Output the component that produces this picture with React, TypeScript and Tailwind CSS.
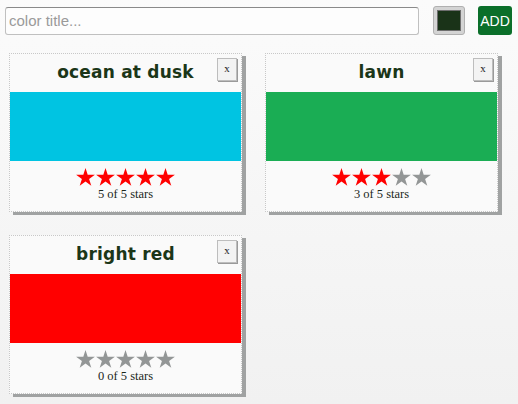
import * as React from 'react'

interface ColorItem {
    title: string
    color: string
    rating: number
}

const colors: ColorItem[] = [
    { title: 'ocean at dusk', color: '#00c4e2', rating: 5 },
    { title: 'lawn', color: '#1aad54', rating: 3 },
    { title: 'bright red', color: '#ff0000', rating: 0 }
]

function Star({ selected }: { selected: boolean }) {
    return (
        <svg width="19" height="18" viewBox="0 0 24 23" className="block">
            <polygon
                points="12,0 14.8,8.6 24,8.6 16.6,14 19.4,22.8 12,17.4 4.6,22.8 7.4,14 0,8.6 9.2,8.6"
                fill={selected ? '#ff0000' : '#939696'}
            />
        </svg>
    )
}

function ColorCard({ title, color, rating }: ColorItem) {
    return (
        <div className="relative w-[233px] h-[159px] flex flex-col bg-[#fafafa] border border-dotted border-[#c8c8c8] shadow-[4px_3px_0_#a0a2a2]">
            <div className="h-[38px] flex items-center justify-center">
                <h1 className="text-[17px] font-bold text-[#1b3618] font-['DejaVu_Sans',sans-serif] tracking-[0.2px]">
                    {title}
                </h1>
            </div>
            <button className="absolute top-[4px] right-[4px] w-[20px] h-[23px] bg-[#f3f3f3] border border-[#bdbdbd] shadow-[1px_1px_0_#9a9a9a] text-[11px] leading-none text-[#222] font-['Liberation_Serif',serif] flex items-center justify-center pb-[3px]">
                x
            </button>
            <div className="h-[69px] w-full" style={{ backgroundColor: color }} />
            <div className="flex-1 flex flex-col items-center pt-[7px]">
                <div className="flex gap-[1px]">
                    {[0, 1, 2, 3, 4].map(i => (
                        <Star key={i} selected={i < rating} />
                    ))}
                </div>
                <p className="text-[12.5px] leading-[14px] mt-[1px] text-[#1a261a] font-['Liberation_Serif',serif]">
                    {rating} of 5 stars
                </p>
            </div>
        </div>
    )
}

export default function App() {
    return (
        <div className="w-[518px] h-[404px] overflow-hidden bg-gradient-to-b from-[#fbfbfb] to-[#f1f1f1] font-['Liberation_Sans',sans-serif]">
            <form className="flex items-center pt-[6px] pl-[5px]" onSubmit={e => e.preventDefault()}>
                <input
                    type="text"
                    placeholder="color title..."
                    className="w-[414px] h-[28px] px-[3px] border border-[#c0c0c0] border-t-[#8a8a8a] rounded-[3px] bg-[#fdfdfd] text-[15px] placeholder:text-[#9a9a9a] outline-none"
                />
                <div className="ml-[14px] w-[32px] h-[29px] rounded-[3px] border border-[#b0b0b0] bg-[#d4d4d4] p-[3px]">
                    <div className="w-full h-full bg-[#1a3318] border border-[#6e6e6e]" />
                </div>
                <button className="ml-[13px] w-[34px] h-[29px] rounded-[3px] bg-[#0b6f2a] bg-[radial-gradient(#1cb048_35%,transparent_40%)] bg-[length:2px_2px] text-white text-[14px] leading-none flex items-center justify-center">
                    ADD
                </button>
            </form>
            <div className="flex flex-wrap gap-x-[23px] gap-y-[23px] pl-[9px] pt-[18px]">
                {colors.map(c => (
                    <ColorCard key={c.title} {...c} />
                ))}
            </div>
        </div>
    )
}
